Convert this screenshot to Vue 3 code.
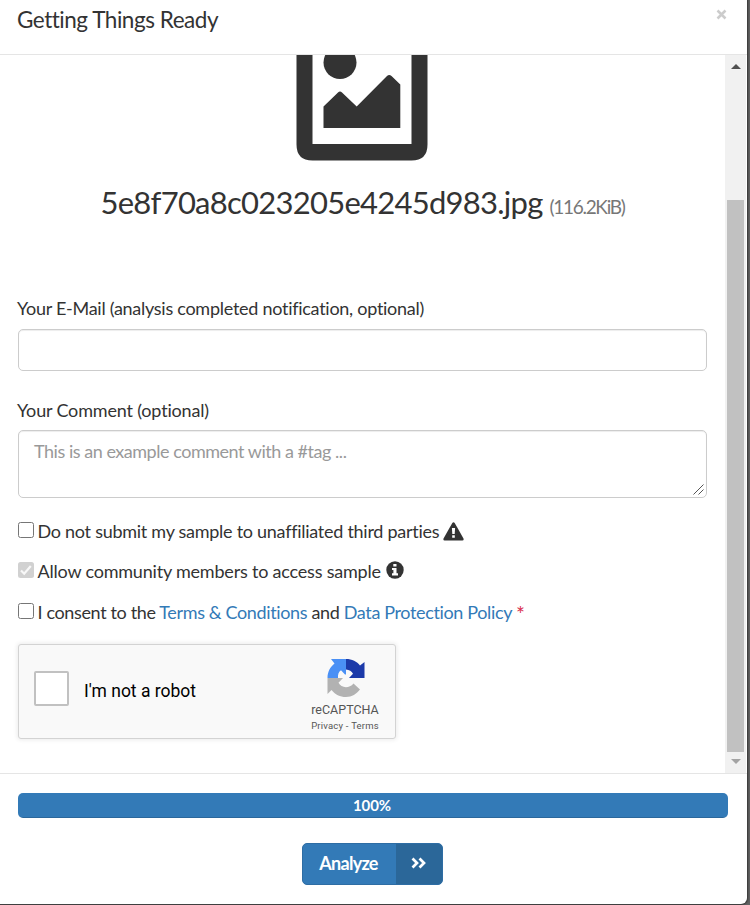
<script setup>
import { ref } from 'vue'

const fileName = '5e8f70a8c023205e4245d983.jpg'
const email = ref('')
const comment = ref('')
const progress = 100
</script>

<template>
  <div class="backdrop">
    <div class="modal">
      <header class="head">
        <h4 class="title">Getting Things Ready</h4>
        <button class="close" aria-label="Close">
          <svg width="11" height="11" viewBox="0 0 11 11"><path d="M1.5 1.5l8 8M9.5 1.5l-8 8" /></svg>
        </button>
      </header>

      <div class="middle">
        <main class="content">
          <svg class="picture" width="132" height="106" viewBox="0 0 132 106">
            <path fill-rule="evenodd" d="M.5 0H131.500V89.500Q131.500 105.500 115.500 105.500H16.500Q.5 105.500 .5 89.500ZM16.500 0V89H115.500V0Z" />
            <circle cx="44" cy="7.500" r="16.500" />
            <path d="M27.500 51.500L42 37.500Q44 35.500 46 37.500L60.700 51.500L91 21Q93.200 18.800 95.500 21L104.300 29.500V73H27.500Z" />
          </svg>
          <h2 class="file"><span class="filename">{{ fileName }}</span><small>(116.2KiB)</small></h2>

          <label class="label mail-label"><span>Your E-Mail (analysis completed notification, optional)</span></label>
          <input v-model="email" class="field" type="text">
          <label class="label comment-label"><span>Your Comment (optional)</span></label>
          <div class="area-wrap">
            <textarea v-model="comment" class="field area" placeholder="This is an example comment with a #tag ..."></textarea>
            <svg class="grip" width="11" height="11" viewBox="0 0 11 11"><path d="M.5 10.500l10-10M5.500 10.500l5-5" /></svg>
          </div>

          <div class="check first">
            <i class="box"></i><span class="t1">Do not submit my sample to unaffiliated third parties</span>
            <svg class="warn" width="21" height="19" viewBox="0 0 21 19">
              <path fill="#333" d="M9.300 1Q10.500-.6 11.700 1L20.500 16.600Q21 18.500 19.400 18.500H1.600Q0 18.500.5 16.600Z" />
              <path fill="#fff" d="M8.900 6h3.200l-.4 6H9.300zM9.200 13.200h2.600v2.500H9.200z" />
            </svg>
          </div>
          <div class="check second">
            <i class="box disabled"><svg width="16" height="16" viewBox="0 0 16 16"><path d="M3 8.500l3.200 3.200L12.800 4" /></svg></i><span class="t2">Allow community members to access sample</span>
            <svg class="info" width="18" height="18" viewBox="0 0 18 18">
              <circle cx="9" cy="9" r="8.700" fill="#333" />
              <path fill="#fff" d="M7.300 3h3.200v2.500H7.300zM6 7h4.500v5.200h1.500v2.200H6v-2.200h1.400V9.100H6z" />
            </svg>
          </div>
          <div class="check third">
            <i class="box"></i><span class="t3">I consent to the <a>Terms &amp; Conditions</a> and <a>Data Protection Policy</a> <b>*</b></span>
          </div>

          <section class="captcha">
            <i class="robot-box"></i>
            <span class="robot">I'm not a robot</span>
            <div class="brand">
              <svg width="38" height="39" viewBox="0 0 38 39">
                <path fill="#1c3aa9" d="M19 0C25 0 30 2.500 33 6.500L37.500 3V19H22L26 14.800C24.500 12.300 22.500 10.700 19 10.500Z" />
                <path fill="#4a90f5" d="M19 0H4L7.500 4.500C3 8 .5 13 .5 19H11C10.700 15.500 11.700 12.800 14 11.300L18 15.500H19Z" />
                <path fill="#b2b2b2" d="M.5 19H16L11.500 23.800C14 29 22 30 26.500 24.500L33 30.500C29.500 35 25 38 19 38C13 38 8 35.500 4.500 31L.5 35Z" />
              </svg>
              <span class="rc">reCAPTCHA</span>
              <span class="terms">Privacy&nbsp;-&nbsp;Terms</span>
            </div>
          </section>
        </main>
        <aside class="scroll">
          <i class="up"></i><i class="thumb"></i><i class="down"></i>
        </aside>
      </div>

      <footer class="foot">
        <div class="bar"><div class="fill" :style="{ width: progress + '%' }"><span>{{ progress }}%</span></div></div>
        <button class="analyze">
          <span class="go"><span>Analyze</span></span>
          <span class="arrows"><svg width="15" height="12" viewBox="0 0 15 12"><path d="M1.500 1.500L6 6L1.500 10.500M8.500 1.500L13 6L8.500 10.500" /></svg></span>
        </button>
      </footer>
    </div>
  </div>
</template>

<style>
html, body { margin: 0; overflow: hidden; background: #626262; }
</style>

<style scoped>
* { box-sizing: border-box; }
.backdrop { width: 750px; height: 905px; overflow: hidden; background: #626262; font-family: Lato, "Open Sans", sans-serif; font-size: 18px; color: #333; }
.modal { width: 747px; height: 904px; overflow: hidden; background: #fff; border-radius: 0 0 6px 0; box-shadow: 0 0 2px 1px #333; display: flex; flex-direction: column; }
.head { height: 55px; flex: none; border-bottom: 1px solid #e5e5e5; padding: 0 20px 0 17px; display: flex; justify-content: space-between; align-items: flex-start; }
.title { margin: 6px 0 0; font-size: 22.5px; line-height: 28px; font-weight: 400; white-space: nowrap; letter-spacing: -.47px; }
.close { padding: 0; margin-top: 9px; border: 0; background: none; height: 11px; display: flex; }
.close path { stroke: #ccc; stroke-width: 2.500; fill: none; }
.middle { height: 718px; flex: none; display: flex; justify-content: space-between; margin-right: 1px; overflow: hidden; }
.content { width: 707px; padding-left: 18px; display: flex; flex-direction: column; }
.picture { align-self: center; display: block; flex: none; margin-right: 1px; fill: #333; }
.file { height: 40px; margin: 21px 0 0; line-height: 40px; font-size: 31px; font-weight: 400; display: flex; align-items: baseline; justify-content: center; white-space: nowrap; letter-spacing: -.75px; }
.file small { margin-left: 7px; font-size: 19px; color: #777; letter-spacing: -1.3px; }
.label { height: 26px; line-height: 26px; white-space: nowrap; margin-left: -1px; letter-spacing: -.27px; }
.mail-label { margin-top: 73px; }
.comment-label { margin-top: 26px; letter-spacing: -.17px; }
.field { width: 689px; height: 42px; margin: 8px 0 0; padding: 8px 15px; border: 1px solid #ccc; border-radius: 5px; background: #fff; box-shadow: inset 0 1px 1px rgba(0, 0, 0, .075); font: inherit; letter-spacing: -.47px; outline: none; }
.area-wrap { position: relative; height: 75px; flex: none; }
.area { display: block; height: 68px; margin-top: 7px; padding-top: 7px; line-height: 26px; resize: none; overflow: hidden; }
.area::placeholder { color: #999; opacity: 1; }
.grip { position: absolute; right: 3px; bottom: 3px; fill: none; stroke: #555; stroke-width: 1; }
.check { height: 26px; flex: none; display: flex; align-items: center; white-space: nowrap; letter-spacing: -.36px; }
.check span { margin-top: -2px; }
.first { margin-top: 21px; }
.second { margin-top: 14px; }
.third { margin-top: 15px; }
.box { width: 16px; height: 16px; margin: -4px 3.500px 0 0; border: 1px solid #767676; border-radius: 2.500px; flex: none; }
.t1 { letter-spacing: -.27px; }
.t2 { letter-spacing: -.2px; }
.disabled { border: 0; background: #d1d1d1; display: flex; }
.disabled path { fill: none; stroke: #f8f8f8; stroke-width: 2.200; }
.warn { margin: -2px 0 0 4px; }
.info { margin: -4px 0 0 5px; }
a { color: #337ab7; }
b { color: #d9304f; font-weight: 400; font-size: 21px; line-height: 18px; vertical-align: -3px; }
.captcha { width: 378px; height: 95px; margin-top: 18px; padding-left: 15px; border: 1px solid #d3d3d3; border-radius: 3px; background: #f9f9f9; box-shadow: 0 0 4px 1px rgba(0, 0, 0, .08); display: flex; align-items: flex-start; color: #000; font-family: Roboto, sans-serif; flex: none; }
.robot-box { width: 35px; height: 35px; margin-top: 26px; border: 2px solid #c1c1c1; border-radius: 2px; background: #fff; flex: none; }
.robot { margin: 35px 0 0 15px; width: 209px; flex: none; font-size: 17.500px; line-height: 22px; letter-spacing: -.02px; }
.brand { width: 104px; flex: none; margin-top: 14px; display: flex; flex-direction: column; align-items: center; color: #555; white-space: nowrap; }
.brand svg { display: block; margin-left: 2px; }
.rc { margin-top: 4px; font-size: 12.500px; line-height: 16px; }
.terms { margin-top: 1px; font-size: 9.500px; line-height: 14px; letter-spacing: .2px; }
.scroll { width: 21px; height: 718px; background: #f1f1f1; display: flex; flex-direction: column; align-items: center; }
.up { margin-top: 9px; border: 5px solid transparent; border-top: 0; border-bottom-color: #505050; }
.thumb { width: 17px; height: 552px; margin-top: 131px; background: #c1c1c1; }
.down { margin-top: 7px; border: 5px solid transparent; border-bottom: 0; border-top-color: #a3a3a3; }
.foot { flex: 1; border-top: 1px solid #e5e5e5; padding: 19px 19px 0 18px; display: flex; flex-direction: column; }
.bar { height: 25px; border-radius: 5px; overflow: hidden; background: #f5f5f5; }
.fill { height: 25px; background: #337ab7; box-shadow: inset 0 -1px 0 rgba(0, 0, 0, .15); color: #fff; text-align: center; font-size: 15px; font-weight: 700; line-height: 24px; padding-right: 2px; letter-spacing: -.1px; }
.analyze { align-self: center; margin: 25px 0 0 -1px; width: 141px; height: 42px; padding: 0; border: 1px solid #2e6da4; border-radius: 5px; overflow: hidden; background: #337ab7; color: #fff; display: flex; font: 700 18px/39px Lato, sans-serif; letter-spacing: -.7px; }
.go { width: 93px; text-align: center; padding-right: 2px; }
.arrows { flex: 1; background: #2b6799; display: flex; align-items: center; justify-content: center; }
.arrows svg { margin: -2px 1px 0 0; }
.arrows path { stroke: #fff; stroke-width: 2.700; fill: none; }
</style>
